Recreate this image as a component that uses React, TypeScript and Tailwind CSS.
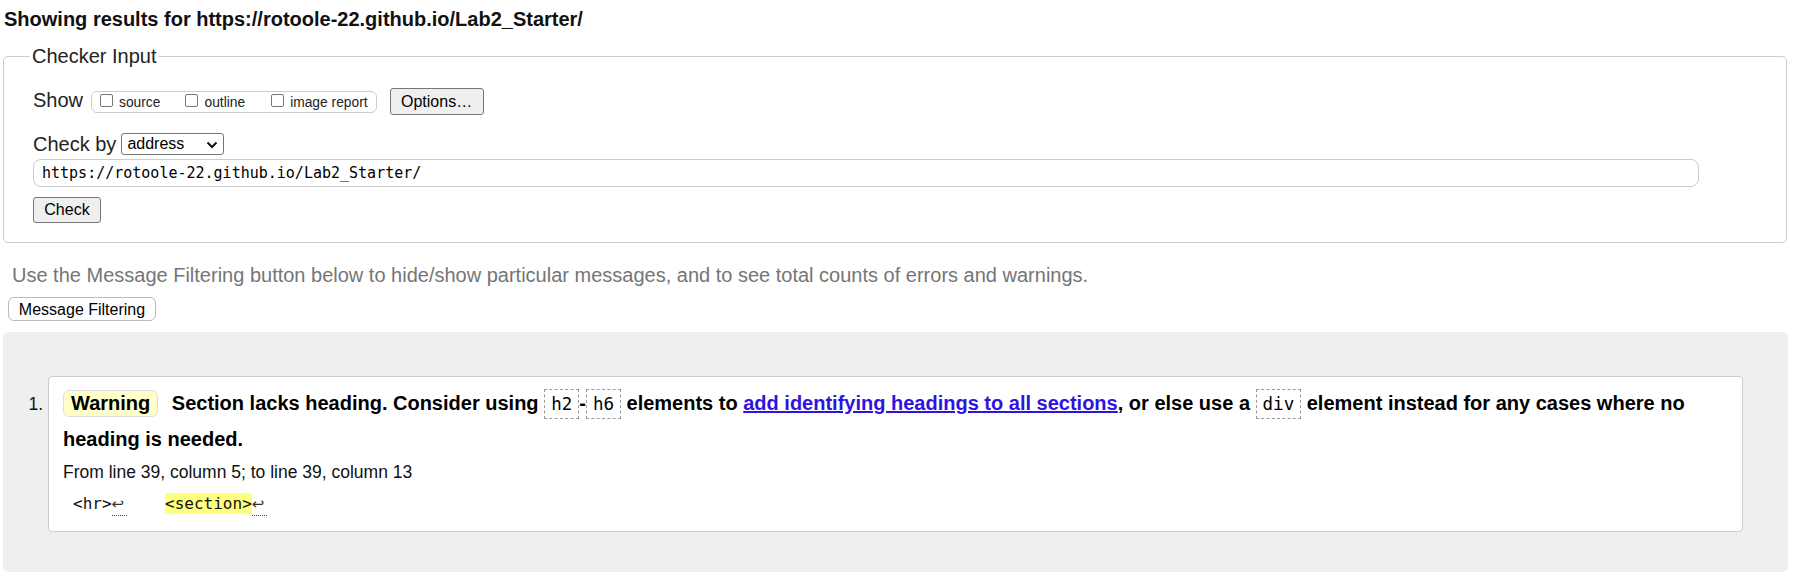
import React from 'react';

const sans = "font-['Liberation_Sans',Arial,sans-serif]";
const mono = "font-['DejaVu_Sans_Mono','Liberation_Mono',monospace]";

const Checkbox: React.FC<{ label: string; gap?: string }> = ({ label, gap }) => (
  <span className={`flex items-start ${gap ?? ''}`}>
    <span className="mt-[1px] block h-[13px] w-[13px] rounded-[2px] border border-[#767676] bg-white" />
    <span className="ml-[6px] mt-[2px] text-[13.8px] leading-[16px] text-[#222]">{label}</span>
  </span>
);

const Code: React.FC<{ children: React.ReactNode }> = ({ children }) => (
  <code className={`${mono} inline-block border border-dashed border-[#999] px-[6px] py-[4px] text-[17.5px] font-normal leading-[20px]`}>
    {children}
  </code>
);

const Ret: React.FC = () => (
  <span className="inline-block w-[15px] border-b border-dotted border-[#444] font-['DejaVu_Sans',sans-serif] text-[15px] leading-[22px] text-[#333]">
    ↩
  </span>
);

export default function App() {
  return (
    <div className={`${sans} min-h-[583px] bg-white text-black`}>
      <h2 className="pl-[4px] pt-[8px] text-[20px] font-bold leading-[23px] text-[#111]">
        Showing results for https://rotoole-22.github.io/Lab2_Starter/
      </h2>

      <fieldset className="ml-[3px] mt-[14px] w-[1784px] rounded-[5px] border border-[#ccc] pb-[19px] pl-[29px]">
        <legend className="ml-[-3px] px-[2px] text-[20px] leading-[23px] text-[#222]">Checker Input</legend>
        <div className="pt-[20px]">
          <div className="flex h-[27px] items-center">
            <span className="pb-[2px] text-[20px] leading-[23px] text-[#222]">Show</span>
            <div className="ml-[8px] flex h-[22px] items-start rounded-[6px] border border-[#ccc] pl-[8px] pr-[8px] pt-[1px]">
              <Checkbox label="source" />
              <Checkbox label="outline" gap="ml-[25px]" />
              <Checkbox label="image report" gap="ml-[26px]" />
            </div>
            <button className="ml-[13px] h-[27px] w-[94px] rounded-[3px] border border-[#767676] bg-[#efefef] text-[16px] text-black">
              Options…
            </button>
          </div>

          <div className="mt-[18px] flex h-[22px] items-center">
            <span className="text-[20px] leading-[23px] text-[#222]">Check by</span>
            <div className="ml-[5px] flex h-[22px] w-[103px] items-center justify-between rounded-[3px] border border-[#767676] bg-white pl-[5px] pr-[5px]">
              <span className="text-[16px] leading-[18px] text-black">address</span>
              <svg width="12" height="8" viewBox="0 0 12 8" className="mt-[1px]">
                <path d="M1.5 1.5 L6 6 L10.5 1.5" fill="none" stroke="#111" strokeWidth="2" />
              </svg>
            </div>
          </div>

          <div className={`${mono} mt-[4px] flex h-[28px] w-[1666px] items-center rounded-[8px] border border-[#ccc] pl-[8px] text-[15px] text-black`}>
            https://rotoole-22.github.io/Lab2_Starter/
          </div>

          <button className="mt-[10px] h-[26px] w-[68px] rounded-[3px] border border-[#767676] bg-[#efefef] text-[16px] text-black">
            Check
          </button>
        </div>
      </fieldset>

      <p className="mt-[21px] pl-[12px] text-[20px] leading-[23px] text-[#757575]">
        Use the Message Filtering button below to hide/show particular messages, and to see total counts of errors and warnings.
      </p>

      <button className="ml-[8px] mt-[10px] h-[24px] w-[148px] rounded-[6px] border border-[#bbb] bg-white text-[16px] text-black">
        Message Filtering
      </button>

      <div className="ml-[3px] mt-[10px] w-[1785px] rounded-[5px] bg-[#efefef] pb-[40px] pl-[45px] pr-[45px] pt-[44px]">
        <ol className="list-decimal">
          <li className="rounded-[4px] border border-[#ccc] bg-white pb-[15px] pl-[14px] pr-[15px] pt-[8px] text-[17.5px] text-[#111]">
            <div className="text-[20px] font-bold leading-[36px] text-black">
              <span className="mr-[8px] inline-block rounded-[6px] border border-[#ddd] bg-[#ffffcc] px-[7px] py-[1px] leading-[23px]">
                Warning
              </span>{' '}
              Section lacks heading. Consider using <Code>h2</Code>-<Code>h6</Code> elements to{' '}
              <a href="#" className="text-[#2f13e0] underline">
                add identifying headings to all sections
              </a>
              , or else use a <Code>div</Code> element instead for any cases where no heading is needed.
            </div>
            <div className="mt-[4px] leading-[22px]">From line 39, column 5; to line 39, column 13</div>
            <div className={`${mono} ml-[10px] mt-[10px] whitespace-pre text-[16px] leading-[22px] text-[#111]`}>
              {'<hr>'}
              <Ret />
              {'    '}
              <span className="bg-[#ffff80] py-[1px]">{'<section>'}</span>
              <Ret />
            </div>
          </li>
        </ol>
      </div>
    </div>
  );
}
